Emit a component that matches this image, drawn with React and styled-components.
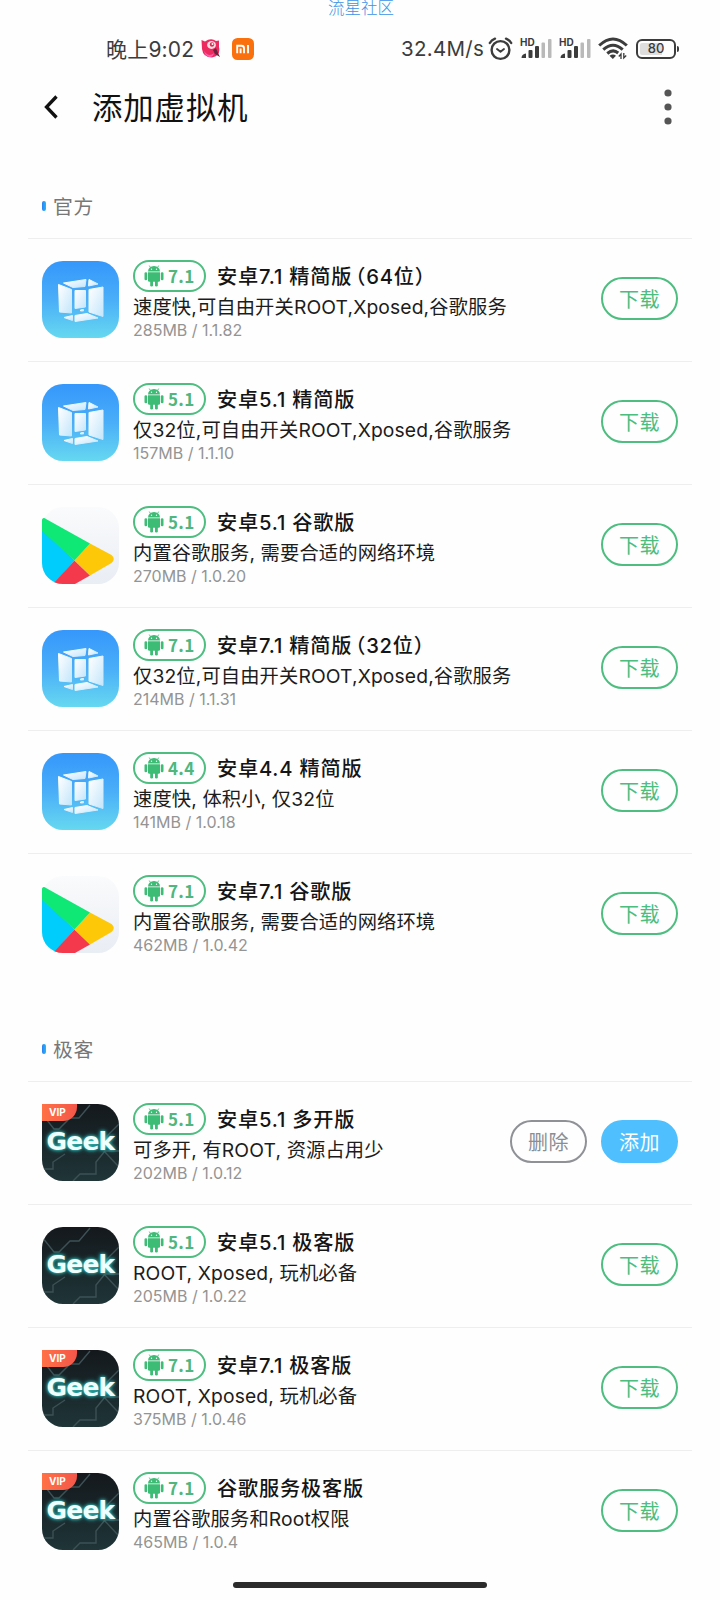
import React from 'react';
import styled, { createGlobalStyle } from 'styled-components';

const officialSystems = [
  { icon: 'cube', version: '7.1', title: '安卓7.1 精简版', bits: '（64位）', desc: '速度快,可自由开关ROOT,Xposed,谷歌服务', meta: '285MB / 1.1.82' },
  { icon: 'cube', version: '5.1', title: '安卓5.1 精简版', desc: '仅32位,可自由开关ROOT,Xposed,谷歌服务', meta: '157MB / 1.1.10' },
  { icon: 'play', version: '5.1', title: '安卓5.1 谷歌版', desc: '内置谷歌服务, 需要合适的网络环境', meta: '270MB / 1.0.20' },
  { icon: 'cube', version: '7.1', title: '安卓7.1 精简版', bits: '（32位）', desc: '仅32位,可自由开关ROOT,Xposed,谷歌服务', meta: '214MB / 1.1.31' },
  { icon: 'cube', version: '4.4', title: '安卓4.4 精简版', desc: '速度快, 体积小, 仅32位', meta: '141MB / 1.0.18' },
  { icon: 'play', version: '7.1', title: '安卓7.1 谷歌版', desc: '内置谷歌服务, 需要合适的网络环境', meta: '462MB / 1.0.42' },
];

const geekSystems = [
  { icon: 'geek', vip: true, version: '5.1', title: '安卓5.1 多开版', desc: '可多开, 有ROOT, 资源占用少', meta: '202MB / 1.0.12', installed: true },
  { icon: 'geek', version: '5.1', title: '安卓5.1 极客版', desc: 'ROOT, Xposed, 玩机必备', meta: '205MB / 1.0.22' },
  { icon: 'geek', vip: true, version: '7.1', title: '安卓7.1 极客版', desc: 'ROOT, Xposed, 玩机必备', meta: '375MB / 1.0.46' },
  { icon: 'geek', vip: true, version: '7.1', title: '谷歌服务极客版', desc: '内置谷歌服务和Root权限', meta: '465MB / 1.0.4' },
];

const CubeIcon = () => (
  <svg width="77" height="77" viewBox="0 0 77 77">
    <defs>
      <linearGradient id="cubeBg" x1="0" y1="0" x2="0" y2="1">
        <stop offset="0" stopColor="#3597fb" />
        <stop offset="0.5" stopColor="#4aaef8" />
        <stop offset="1" stopColor="#66d8f0" />
      </linearGradient>
      <linearGradient id="cubeFace" x1="0" y1="0" x2="1" y2="1">
        <stop offset="0" stopColor="#ffffff" />
        <stop offset="1" stopColor="#c4e6fb" />
      </linearGradient>
    </defs>
    <rect width="77" height="77" rx="21" fill="url(#cubeBg)" />
    <g fill="url(#cubeFace)" stroke="url(#cubeFace)" strokeWidth="1" strokeLinejoin="round">
      <path d="M16.500 23.500 L29.500 28.500 V52 L17.500 51 Z" />
      <path d="M47 28.500 L61 26 V55.500 L47 51 Z" />
      <path d="M33 29.500 H43.500 V46 L33 47.500 Z" />
      <path d="M21.500 22 L44 18.500 L43 25.500 L31 26.500 Z" />
      <path d="M47 18.500 L56 23 L46.500 25 Z" />
      <path d="M33 54.500 L45 52.500 L56 57 L33 60.500 Z" />
      <path d="M30.500 54.500 V59.500 L22 56.500 Z" />
      <path d="M38.500 49 L41.500 48.500 V50 H38.500 Z" />
    </g>
  </svg>
);

const PlayIcon = () => (
  <svg width="77" height="77" viewBox="0 0 77 77">
    <defs>
      <clipPath id="playClip">
        <rect width="77" height="77" rx="21" />
      </clipPath>
      <linearGradient id="playBg" x1="0" y1="0" x2="0" y2="1">
        <stop offset="0" stopColor="#fafbfc" />
        <stop offset="1" stopColor="#e9edf4" />
      </linearGradient>
    </defs>
    <g clipPath="url(#playClip)">
      <rect width="77" height="77" fill="url(#playBg)" />
      <path d="M0 20 L32.500 53.500 L12 77 H0 Z" fill="#00cdfb" />
      <path d="M32.500 53.500 L48 68.500 L33 77 H11 Z" fill="#f3394b" />
      <path d="M48 36.500 L69.500 48 Q74 52 69.500 56 L48 68.500 L32.500 53.500 Z" fill="#fdc808" />
    </g>
    <path d="M0 24 V12.500 Q1.500 10 4 12 L48 36.500 L32.500 53.500 Z" fill="#10e876" />
  </svg>
);

const GeekIcon = ({ vip }) => (
  <GeekTile $vip={vip}>
    <svg width="77" height="77" viewBox="0 0 77 77" fill="none" stroke="#3d5155" strokeWidth="1.4">
      <path d="M48 1 L37 14 H28 L17 25 H12 L0 10" />
      <path d="M77 20 L65 32 V42" />
      <path d="M0 65 H11 V58 L23 50" />
      <path d="M77 47 H63 L54 58 V70 H38 L31 77" />
      <path d="M62 47 L77 63" />
    </svg>
    <GeekWord>Geek</GeekWord>
    {vip && <VipTag>VIP</VipTag>}
  </GeekTile>
);

const Robot = () => (
  <svg width="20" height="22" viewBox="0 0 20 22" fill="#3cbc74">
    <path d="M4 6.500 A6 5.600 0 0 1 16 6.500 Z" />
    <path d="M6.300 2.200 L5.300 0.600 M13.700 2.200 L14.700 0.600" stroke="#3cbc74" strokeWidth="0.9" />
    <circle cx="7.500" cy="4.300" r="0.700" fill="#fff" />
    <circle cx="12.500" cy="4.300" r="0.700" fill="#fff" />
    <path d="M4 7.300 H16 V15.500 Q16 16.800 14.700 16.800 H5.300 Q4 16.800 4 15.500 Z" />
    <rect x="0.500" y="7.300" width="2.700" height="8" rx="1.300" />
    <rect x="16.800" y="7.300" width="2.700" height="8" rx="1.300" />
    <rect x="6.200" y="15" width="2.800" height="6.500" rx="1.300" />
    <rect x="11" y="15" width="2.800" height="6.500" rx="1.300" />
  </svg>
);

const FishIcon = () => (
  <svg width="20" height="20" viewBox="0 0 20 20">
    <path d="M0.500 1 L4 2.500 Q10 -1.500 15 2 L18 1.500 L18 8 Q20 17 11 18.500 Q2 18.500 1 10 Z" fill="#ec2b60" />
    <path d="M3 12 Q8 19 13 14 Q12 18.500 8 18 Q4 16.500 3 12 Z" fill="#ff5fae" />
    <ellipse cx="10.500" cy="6" rx="4.400" ry="3.900" fill="#f9dfe3" />
    <circle cx="11" cy="5.500" r="2.200" fill="#d92c50" />
    <circle cx="11.500" cy="5" r="1" fill="#fff" />
    <path d="M12 11 L15 9 L17 14 L19 18 L14 15 Z" fill="#67233f" />
  </svg>
);

const MiIcon = () => (
  <svg width="22" height="22" viewBox="0 0 22 22">
    <rect width="22" height="22" rx="5.500" fill="#f9700d" />
    <path d="M5.200 15.200 V7.700 H9.500 Q12 7.700 12 10.200 V15.200 M8.600 10.500 V15.200 M16 6.900 V15.200" fill="none" stroke="#fff" strokeWidth="1.900" />
  </svg>
);

const AlarmIcon = () => (
  <svg width="25" height="24" viewBox="0 0 25 24" fill="none" stroke="#3c3c3c" strokeWidth="2.400" strokeLinecap="round" strokeLinejoin="round">
    <circle cx="12.500" cy="13" r="8.900" />
    <path d="M1.800 6 Q3.500 3 7 1.700 M18 1.700 Q21.500 3 23.200 6" />
    <path d="M9 12 L12.500 14.800 L16 12" strokeWidth="1.900" />
  </svg>
);

const SignalIcon = () => (
  <SignalBox>
    <SignalTag>HD</SignalTag>
    <svg width="32" height="21" viewBox="0 0 32 21" fill="#3c3c3c">
      <path d="M1.500 20 Q1.500 16 6 15.500 V20 Z" />
      <rect x="8.500" y="12" width="4" height="8" rx="1" />
      <rect x="15" y="8" width="4" height="12" rx="1" />
      <rect x="21.500" y="4.500" width="3.500" height="15.500" rx="1" fill="#b9b9b9" />
      <rect x="28" y="1" width="3.500" height="19" rx="1" fill="#b9b9b9" />
    </svg>
  </SignalBox>
);

const WifiIcon = () => (
  <svg width="30" height="23" viewBox="0 0 30 23" fill="none" stroke="#3c3c3c" strokeWidth="3">
    <path d="M1.200 8.500 Q15 -4.500 28.800 8.500" />
    <path d="M5.300 12.700 Q15 3.700 24.700 12.700" />
    <path d="M9.300 16.500 Q15 11.500 20.200 16" />
    <path d="M11.500 18.700 Q15 16.500 18 18.700 L14.800 22 Z" fill="#3c3c3c" stroke="none" />
    <path d="M23 22 V17 L20.800 19.500 M25.800 16 V21 L28.200 18.500" strokeWidth="1.300" />
  </svg>
);

const BackIcon = () => (
  <svg width="16" height="24" viewBox="0 0 16 24" fill="none" stroke="#111" strokeWidth="3.300">
    <path d="M13.500 1.500 L3.500 12 L13.500 22.500" />
  </svg>
);

const MoreIcon = () => (
  <svg width="8" height="36" viewBox="0 0 8 36" fill="#555">
    <circle cx="4" cy="4" r="3.600" />
    <circle cx="4" cy="18" r="3.600" />
    <circle cx="4" cy="32" r="3.600" />
  </svg>
);

const SystemIcon = ({ type, vip }) => {
  if (type === 'cube') return <CubeIcon />;
  if (type === 'play') return <PlayIcon />;
  return <GeekIcon vip={vip} />;
};

const SystemRow = ({ item }) => (
  <Row>
    <IconSlot>
      <SystemIcon type={item.icon} vip={item.vip} />
    </IconSlot>
    <Info>
      <TitleLine>
        <Badge>
          <Robot />
          <span>{item.version}</span>
        </Badge>
        <Title>
          {item.title}
          {item.bits && <Bits>{item.bits}</Bits>}
        </Title>
      </TitleLine>
      <Desc>{item.desc}</Desc>
      <Meta>{item.meta}</Meta>
    </Info>
    <Actions>
      {item.installed ? (
        <>
          <PillButton $variant="grey">删除</PillButton>
          <PillButton $variant="blue">添加</PillButton>
        </>
      ) : (
        <PillButton $variant="green">下载</PillButton>
      )}
    </Actions>
  </Row>
);

const SystemSection = ({ name, items }) => (
  <Section>
    <SectionName>{name}</SectionName>
    {items.map((item, index) => (
      <SystemRow key={index} item={item} />
    ))}
  </Section>
);

const App = () => (
  <>
    <GlobalStyle />
    <Screen>
      <Community>流星社区</Community>
      <StatusBar>
        <Clock>晚上9:02</Clock>
        <FishIcon />
        <MiIcon />
        <Speed>32.4M/s</Speed>
        <StatusIcons>
          <AlarmIcon />
          <SignalIcon />
          <SignalIcon />
          <WifiIcon />
          <Battery>
            <BatteryBody>80</BatteryBody>
            <BatteryTip />
          </Battery>
        </StatusIcons>
      </StatusBar>
      <Header>
        <BackIcon />
        <h1>添加虚拟机</h1>
        <MoreIcon />
      </Header>
      <SystemSection name="官方" items={officialSystems} />
      <SystemSection name="极客" items={geekSystems} />
      <HomeBar />
    </Screen>
  </>
);

export default App;

const GlobalStyle = createGlobalStyle`
  * {
    box-sizing: border-box;
  }
  body {
    margin: 0;
    background: #fff;
    font-family: Inter, 'Noto Sans CJK SC', sans-serif;
  }
  svg {
    display: block;
    flex-shrink: 0;
  }
`;

const Screen = styled.div`
  width: 720px;
  height: 1600px;
  overflow: hidden;
  background: #fefefe;
  display: flex;
  flex-direction: column;

  > * {
    flex-shrink: 0;
  }
`;

const Community = styled.div`
  height: 16px;
  padding-left: 328px;
  line-height: 15px;
  font-size: 16.5px;
  font-weight: 300;
  color: #3d93e6;
  font-family: 'Noto Sans CJK SC', sans-serif;
`;

const StatusBar = styled.div`
  height: 64px;
  padding: 1px 41px 0 106px;
  display: flex;
  align-items: center;
  color: #3c3c3c;

  > svg + svg {
    margin-left: 11px;
  }
`;

const Clock = styled.div`
  width: 95px;
  padding-bottom: 2px;
  font-size: 21px;
  letter-spacing: 0.2px;
  white-space: nowrap;
`;

const Speed = styled.div`
  margin-left: auto;
  width: 87px;
  font-size: 20.5px;
  letter-spacing: 0.3px;
  white-space: nowrap;
`;

const StatusIcons = styled.div`
  display: flex;
  align-items: center;
  gap: 7px;
`;

const SignalBox = styled.div`
  position: relative;
`;

const SignalTag = styled.span`
  position: absolute;
  left: 0;
  top: -1px;
  font-size: 10px;
  line-height: 10px;
  font-weight: 700;
`;

const Battery = styled.div`
  margin-left: 1px;
  display: flex;
  align-items: center;
  gap: 1px;
`;

const BatteryBody = styled.div`
  width: 40px;
  height: 20px;
  border: 2.4px solid #3c3c3c;
  border-radius: 6px;
  background: linear-gradient(90deg, #dedede 70%, #fefefe 70%) content-box;
  padding: 2px;
  display: flex;
  align-items: center;
  justify-content: center;
  font-size: 13px;
  line-height: 13px;
  font-weight: 500;
`;

const BatteryTip = styled.div`
  width: 2px;
  height: 6px;
  border-radius: 0 2px 2px 0;
  background: #3c3c3c;
`;

const Header = styled.header`
  height: 56px;
  padding: 0 48px 2px 43px;
  display: flex;
  align-items: center;

  h1 {
    flex: 1;
    margin: 1px 0 0 33px;
    font-size: 30.3px;
    line-height: 40px;
    letter-spacing: 1px;
    font-weight: 400;
    color: #111;
  }
`;

const Section = styled.section`
  padding: 0 28px;

  & + & {
    margin-top: 3px;
  }
`;

const SectionName = styled.h2`
  height: 102px;
  margin: 0;
  padding: 37px 0 0 14px;
  display: flex;
  align-items: center;
  gap: 7px;
  font-size: 19.8px;
  letter-spacing: 0.6px;
  font-weight: 400;
  color: #777;

  &::before {
    content: '';
    width: 4px;
    height: 10px;
    border-radius: 2px;
    background: linear-gradient(90deg, #2f7df0, #1ebcfa);
  }
`;

const Row = styled.article`
  height: 123px;
  padding: 22px 14px 0;
  border-top: 1px solid #eee;
  display: flex;
  align-items: flex-start;
`;

const IconSlot = styled.div`
  width: 77px;
  flex-shrink: 0;
`;

const Info = styled.div`
  flex: 1;
  min-width: 0;
  margin: -1px 0 0 14px;
  white-space: nowrap;
`;

const TitleLine = styled.div`
  height: 32px;
  display: flex;
  align-items: center;
`;

const Badge = styled.div`
  width: 73px;
  height: 32px;
  border: 2px solid #4dbd80;
  border-radius: 16px;
  padding-left: 9px;
  display: flex;
  align-items: center;
  gap: 4px;
  color: #4fb67d;
  font-family: 'Noto Sans CJK SC', sans-serif;
  font-size: 17px;
  line-height: 28px;
  font-weight: 700;
  letter-spacing: 0.3px;
`;

const Title = styled.h3`
  margin: 2px 0 0 11px;
  font-size: 20.2px;
  line-height: 32px;
  letter-spacing: 0.8px;
  font-weight: 500;
  font-feature-settings: 'halt';
  color: #151515;
`;

const Bits = styled.span`
  margin-left: 3px;
`;

const Desc = styled.p`
  margin: 0;
  font-size: 19.3px;
  line-height: 30px;
  letter-spacing: 0.12px;
  font-weight: 400;
  color: #1c1c1c;
`;

const Meta = styled.p`
  margin: 0;
  font-size: 16px;
  line-height: 16px;
  color: #949494;
`;

const Actions = styled.div`
  display: flex;
  gap: 14px;
  margin-top: 16px;
`;

const variants = {
  green: { text: '#4bbd7f', border: '#4dbd80', fill: 'transparent' },
  grey: { text: '#8b8d94', border: '#8f9196', fill: 'transparent' },
  blue: { text: '#fff', border: '#4fc0fd', fill: '#4fc0fd' },
};

const PillButton = styled.button`
  width: 77px;
  height: 43px;
  padding: 1px 0 0;
  border: 2px solid ${(props) => variants[props.$variant].border};
  border-radius: 22px;
  background: ${(props) => variants[props.$variant].fill};
  color: ${(props) => variants[props.$variant].text};
  font-family: 'Noto Sans CJK SC', sans-serif;
  font-size: 20px;
  line-height: 38px;
  font-weight: 400;
  letter-spacing: 0.4px;
`;

const GeekTile = styled.div`
  position: relative;
  width: 77px;
  height: 77px;
  overflow: hidden;
  border-radius: ${(props) => (props.$vip ? '0 21px 21px 21px' : '21px')};
  background: linear-gradient(#14181c, #1f3538);
`;

const GeekWord = styled.span`
  position: absolute;
  left: 0;
  top: 23px;
  width: 77px;
  text-align: center;
  font-family: 'DejaVu Sans', sans-serif;
  font-size: 25px;
  line-height: 30px;
  letter-spacing: -0.8px;
  font-weight: 700;
  color: #effffd;
  text-shadow: 0 0 3px #35c9c3, 0 0 5px #2fb9b6;
`;

const VipTag = styled.span`
  position: absolute;
  left: 0;
  top: 0;
  width: 35px;
  height: 17px;
  border-radius: 0 0 14px 0;
  background: linear-gradient(90deg, #ff7145, #f4564a);
  color: #fff;
  font-size: 10px;
  line-height: 17px;
  font-weight: 700;
  padding-left: 7px;
`;

const HomeBar = styled.div`
  width: 254px;
  height: 6px;
  margin: 9px auto 0;
  border-radius: 3px;
  background: #2b2b2b;
`;
